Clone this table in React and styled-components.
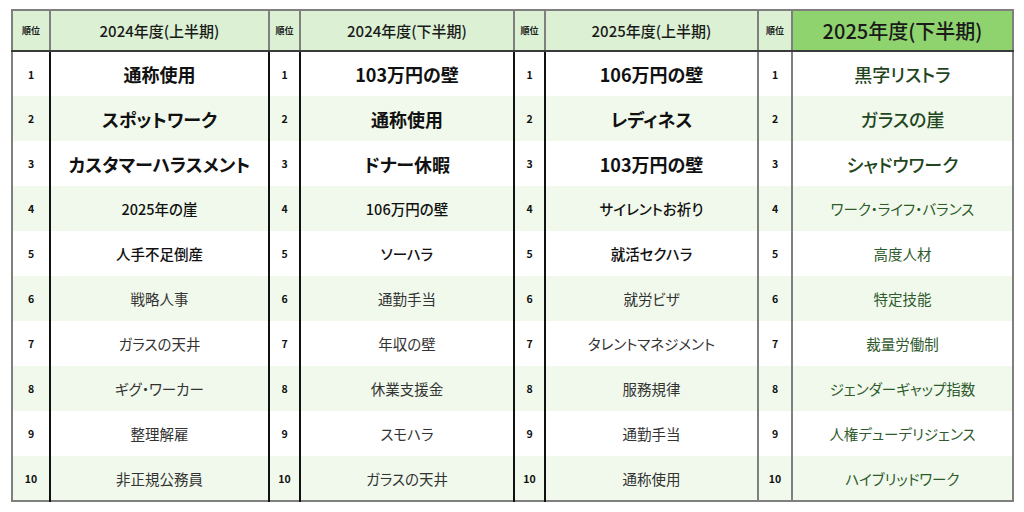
import React from "react";
import styled, { createGlobalStyle } from "styled-components";

const Global = createGlobalStyle`
  html, body { margin: 0; padding: 0; background: #ffffff; }
  body { font-family: "Noto Sans CJK JP", "Noto Sans", sans-serif; }
`;

const Page = styled.div`
  padding: 9px 0 0 11px;
`;

const Table = styled.table`
  border-collapse: collapse;
  table-layout: fixed;
  width: 1002px;
  border: 2px solid #7f7f7f;
  font-feature-settings: "palt";
`;

const HeadRow = styled.tr`
  height: 41px;
`;

const BodyRow = styled.tr`
  height: 45px;
  background: ${(p) => (p.$even ? "#f0f9eb" : "#ffffff")};
`;

const RankHead = styled.th`
  background: #dcf1d3;
  border: 2px solid #7f7f7f;
  border-bottom: 2px solid #3a3a3a;
  font-size: 9px;
  font-weight: 700;
  color: #222;
  padding: 0;
  text-align: center;
`;

const TermHead = styled.th`
  background: ${(p) => (p.$highlight ? "#8fd36f" : "#dcf1d3")};
  border: 2px solid #7f7f7f;
  border-bottom: 2px solid #3a3a3a;
  font-size: ${(p) => (p.$highlight ? "20px" : "15px")};
  font-weight: 500;
  color: #1a1a1a;
  padding: 0;
  text-align: center;
  white-space: nowrap;
`;

const RankCell = styled.td`
  border-left: 2px solid #7f7f7f;
  border-right: 2px solid ${(p) => (p.$soft ? "#7f7f7f" : "#111")};
  font-size: 10.5px;
  font-weight: 700;
  color: #111;
  text-align: center;
  padding: 0;
`;

const weightFor = (rank, green) => {
  if (green) return rank <= 3 ? 500 : 400;
  if (rank <= 3) return 700;
  if (rank <= 5) return 500;
  return 400;
};

const colorFor = (rank, green) => {
  if (green) return rank <= 3 ? "#1f461d" : "#2e5a2c";
  return rank <= 5 ? "#111" : "#333";
};

const TermCell = styled.td`
  border-right: 2px solid ${(p) => (p.$soft ? "#7f7f7f" : "#111")};
  font-size: ${(p) => (p.$rank <= 3 ? "18px" : "14.5px")};
  font-weight: ${(p) => weightFor(p.$rank, p.$green)};
  color: ${(p) => colorFor(p.$rank, p.$green)};
  text-align: center;
  padding: 0;
  white-space: nowrap;
`;

const groups = [
  {
    title: "2024年度(上半期)",
    rankW: 38,
    termW: 219,
    items: ["通称使用", "スポットワーク", "カスタマーハラスメント", "2025年の崖", "人手不足倒産", "戦略人事", "ガラスの天井", "ギグ・ワーカー", "整理解雇", "非正規公務員"],
  },
  {
    title: "2024年度(下半期)",
    rankW: 31,
    termW: 214,
    items: ["103万円の壁", "通称使用", "ドナー休暇", "106万円の壁", "ソーハラ", "通勤手当", "年収の壁", "休業支援金", "スモハラ", "ガラスの天井"],
  },
  {
    title: "2025年度(上半期)",
    rankW: 31,
    termW: 213,
    softRight: true,
    items: ["106万円の壁", "レディネス", "103万円の壁", "サイレントお祈り", "就活セクハラ", "就労ビザ", "タレントマネジメント", "服務規律", "通勤手当", "通称使用"],
  },
  {
    title: "2025年度(下半期)",
    rankW: 34,
    termW: 221,
    highlight: true,
    soft: true,
    softRight: true,
    items: ["黒字リストラ", "ガラスの崖", "シャドウワーク", "ワーク・ライフ・バランス", "高度人材", "特定技能", "裁量労働制", "ジェンダーギャップ指数", "人権デューデリジェンス", "ハイブリッドワーク"],
  },
];

export default function App() {
  const ranks = Array.from({ length: 10 }, (_, i) => i + 1);
  return (
    <Page>
      <Global />
      <Table>
        <colgroup>
          {groups.map((g, i) => (
            <React.Fragment key={i}>
              <col style={{ width: g.rankW }} />
              <col style={{ width: g.termW }} />
            </React.Fragment>
          ))}
        </colgroup>
        <thead>
          <HeadRow>
            {groups.map((g, i) => (
              <React.Fragment key={i}>
                <RankHead>順位</RankHead>
                <TermHead $highlight={g.highlight}>{g.title}</TermHead>
              </React.Fragment>
            ))}
          </HeadRow>
        </thead>
        <tbody>
          {ranks.map((r) => (
            <BodyRow key={r} $even={r % 2 === 0}>
              {groups.map((g, i) => (
                <React.Fragment key={i}>
                  <RankCell $soft={g.soft}>{r}</RankCell>
                  <TermCell $soft={g.softRight} $rank={r} $green={g.highlight}>
                    {g.items[r - 1]}
                  </TermCell>
                </React.Fragment>
              ))}
            </BodyRow>
          ))}
        </tbody>
      </Table>
    </Page>
  );
}
